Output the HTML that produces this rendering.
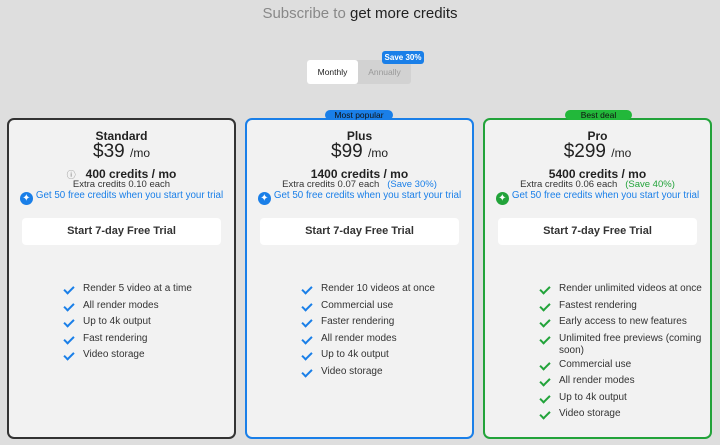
<!DOCTYPE html>
<html><head><style>
*{margin:0;padding:0;box-sizing:border-box}
body{width:720px;height:445px;background:#dedede;font-family:"Liberation Sans",sans-serif;position:relative;overflow:hidden;color:#222}
.a{position:absolute}
h1{position:absolute;top:5px;left:0;width:720px;text-align:center;font-size:15px;font-weight:normal;color:#222}
h1 span{color:#888}
.card{position:absolute;top:118px;width:229px;height:321px;background:#f2f2f2;border-radius:7px;border:2px solid #333}
.c{position:absolute;left:0;width:100%;text-align:center}
.t{top:9px;font-size:12px;font-weight:bold}
.p{top:22px;font-size:19px;line-height:20px}
.p small{font-size:12px}
.cr{top:47px;font-size:12px;font-weight:bold}
.ex{top:59px;font-size:9.5px;color:#333}
.g{top:70px;font-size:9.8px;color:#1a7fe8}
.g i{display:inline-block;width:13px;height:13px;border-radius:50%;background:#1a7fe8;vertical-align:-3px;margin-right:3px;color:#fff;font-style:normal;font-size:10px;line-height:13px}
.btn{position:absolute;left:13px;top:98px;width:199px;height:27px;background:#fff;border-radius:4px;text-align:center;line-height:27px;font-size:11px;font-weight:bold;color:#333}
ul{position:absolute;left:54px;top:161px;width:140px;list-style:none;font-size:10px;color:#333}
li{position:relative;padding-left:20px;min-height:16.5px;line-height:12px;padding-top:2px;white-space:nowrap}
li:before{content:"";position:absolute;left:3px;top:3px;width:4px;height:8px;border-right:2px solid #1a7fe8;border-bottom:2px solid #1a7fe8;transform:rotate(45deg)}
.pro li:before{border-color:#22a33a}
.badge{position:absolute;top:110px;height:10px;border-radius:5px;font-size:8.5px;text-align:center;line-height:10px;color:#111}
</style></head><body>
<h1><span>Subscribe to</span> get more credits</h1>
<div class="a" style="left:307px;top:60px;width:104px;height:24px;background:#d2d2d2;border-radius:3px"></div>
<div class="a" style="left:307px;top:60px;width:51px;height:24px;background:#fff;border-radius:3px;font-size:8.5px;text-align:center;line-height:24px">Monthly</div>
<div class="a" style="left:358px;top:60px;width:53px;height:24px;font-size:8.5px;text-align:center;line-height:24px;color:#999">Annually</div>
<div class="a" style="left:382px;top:51px;width:42px;height:13px;background:#1a7fe8;border-radius:3px;font-size:8px;font-weight:bold;color:#fff;text-align:center;line-height:13px">Save 30%</div>

<div class="card" style="left:7px">
<div class="c t">Standard</div><div class="c p">$39 <small>/mo</small></div>
<div class="c cr"><span style="font-weight:normal;color:#777;font-size:9px;margin-right:10px">ⓘ</span>400 credits / mo</div>
<div class="c ex">Extra credits 0.10 each</div>
<div class="c g"><i>✦</i>Get 50 free credits when you start your trial</div>
<div class="btn">Start 7-day Free Trial</div>
<ul><li>Render 5 video at a time</li><li>All render modes</li><li>Up to 4k output</li><li>Fast rendering</li><li>Video storage</li></ul>
</div>

<div class="card" style="left:245px;border-color:#1a7fe8">
<div class="c t">Plus</div><div class="c p">$99 <small>/mo</small></div>
<div class="c cr">1400 credits / mo</div>
<div class="c ex">Extra credits 0.07 each &nbsp;&nbsp;<span style="color:#1a7fe8">(Save 30%)</span></div>
<div class="c g"><i>✦</i>Get 50 free credits when you start your trial</div>
<div class="btn">Start 7-day Free Trial</div>
<ul><li>Render 10 videos at once</li><li>Commercial use</li><li>Faster rendering</li><li>All render modes</li><li>Up to 4k output</li><li>Video storage</li></ul>
</div>

<div class="card pro" style="left:483px;border-color:#22a33a">
<div class="c t">Pro</div><div class="c p">$299 <small>/mo</small></div>
<div class="c cr">5400 credits / mo</div>
<div class="c ex">Extra credits 0.06 each &nbsp;&nbsp;<span style="color:#22a33a">(Save 40%)</span></div>
<div class="c g"><i style="background:#22a33a">✦</i>Get 50 free credits when you start your trial</div>
<div class="btn">Start 7-day Free Trial</div>
<ul><li>Render unlimited videos at once</li><li>Fastest rendering</li><li>Early access to new features</li><li>Unlimited free previews (coming<br>soon)</li><li>Commercial use</li><li>All render modes</li><li>Up to 4k output</li><li>Video storage</li></ul>
</div>

<div class="badge" style="left:325px;width:68px;background:#1a7fe8">Most popular</div>
<div class="badge" style="left:565px;width:67px;background:#22b83a">Best deal</div>
</body></html>
